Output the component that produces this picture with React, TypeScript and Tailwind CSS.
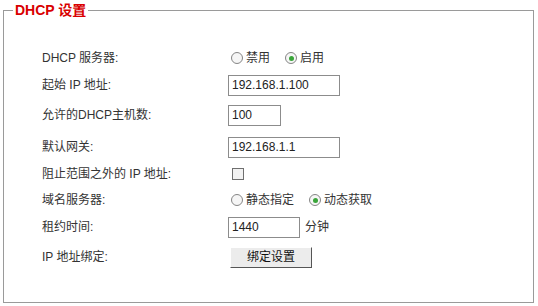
import React from "react";

const font = { fontFamily: '"Liberation Sans", Arial, "Noto Sans CJK SC", sans-serif' };

function Radio({ checked, label }: { checked?: boolean; label: string }) {
  return (
    <span className="flex items-center">
      <span className="w-[12px] h-[12px] rounded-full border border-[#858585] bg-[#f6f6f6] flex items-center justify-center">
        {checked && <span className="w-[5px] h-[5px] rounded-full bg-[#3aa53a]" />}
      </span>
      <span className="ml-[3px]">{label}</span>
    </span>
  );
}

function Row({ h, label, children }: { h: string; label: string; children: React.ReactNode }) {
  return (
    <div className={`flex items-center ${h}`}>
      <div className="w-[186px] shrink-0">{label}</div>
      <div className="flex items-center">{children}</div>
    </div>
  );
}

function Input({ w, value }: { w: string; value: string }) {
  return (
    <div className={`${w} h-[21px] border border-[#8c8c8c] bg-white flex items-center pl-[3px] text-[#222]`}>{value}</div>
  );
}

export default function App() {
  return (
    <div className="w-[538px] h-[306px] bg-white text-[12px] text-[#333]" style={font}>
      <fieldset className="ml-[3px] mr-[4px] h-[303px] border border-[#9a9a9a] p-0 m-0">
        <legend className="ml-[9px] px-[2px] text-[14px] leading-[20px] font-bold text-[#d90000]">DHCP 设置</legend>
        <div className="pl-[38px] pt-[25px]">
          <Row h="h-[26px]" label="DHCP 服务器:">
            <span className="ml-[3px] flex items-center gap-[15px]">
              <Radio label="禁用" />
              <Radio checked label="启用" />
            </span>
          </Row>
          <Row h="h-[28px]" label="起始 IP 地址:">
            <Input w="w-[112px]" value="192.168.1.100" />
          </Row>
          <Row h="h-[32px]" label="允许的DHCP主机数:">
            <Input w="w-[53px]" value="100" />
          </Row>
          <Row h="h-[32px]" label="默认网关:">
            <Input w="w-[112px]" value="192.168.1.1" />
          </Row>
          <Row h="h-[22px]" label="阻止范围之外的 IP 地址:">
            <span className="ml-[4px] w-[12px] h-[12px] border border-[#6f6f6f] bg-[#f2f2f2]" />
          </Row>
          <Row h="h-[30px]" label="域名服务器:">
            <span className="ml-[3px] flex items-center gap-[15px]">
              <Radio label="静态指定" />
              <Radio checked label="动态获取" />
            </span>
          </Row>
          <Row h="h-[24px]" label="租约时间:">
            <Input w="w-[72px]" value="1440" />
            <span className="ml-[5px]">分钟</span>
          </Row>
          <Row h="h-[36px]" label="IP 地址绑定:">
            <div className="ml-[2px] w-[82px] h-[21px] bg-[#ececec] border border-t-white border-l-white border-r-[#555] border-b-[#555] flex items-center justify-center text-[#111]">
              绑定设置
            </div>
          </Row>
        </div>
      </fieldset>
    </div>
  );
}
